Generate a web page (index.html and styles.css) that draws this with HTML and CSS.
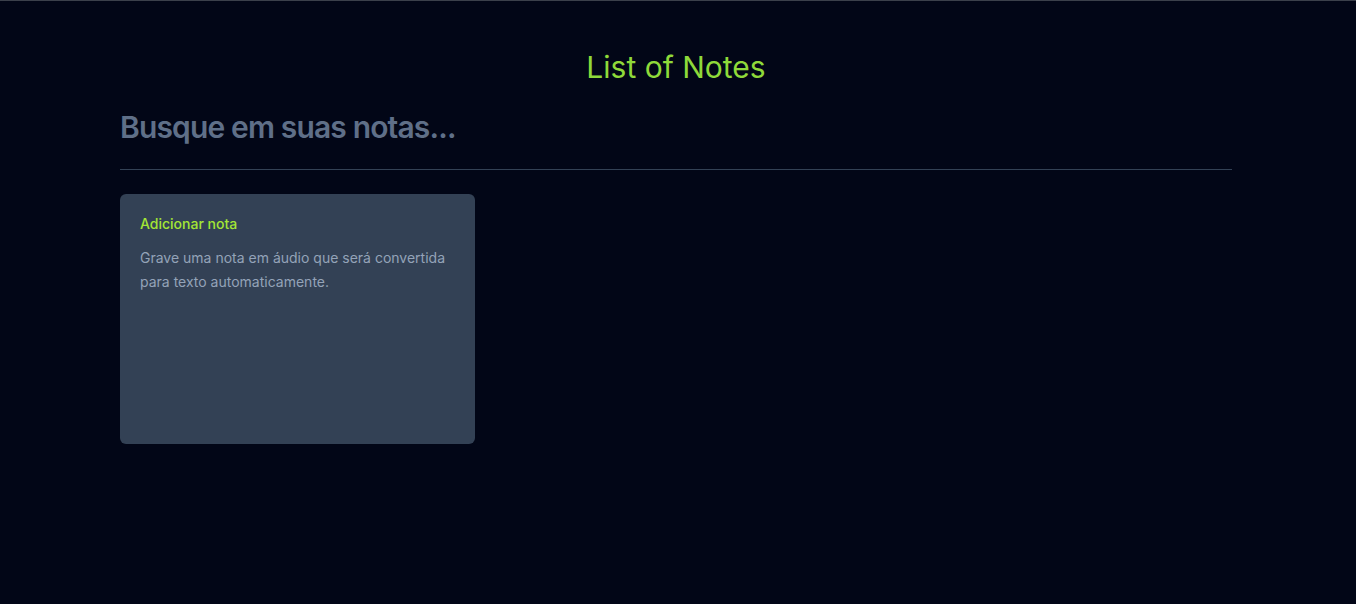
FILE: index.html
```html
<!DOCTYPE html>
<html lang="pt-BR">
<head>
<meta charset="utf-8">
<title>List of Notes</title>
<link rel="stylesheet" href="styles.css">
</head>
<body>
<div class="topline"></div>
<main class="container">
  <h1 class="title">List of Notes</h1>
  <form class="search">
    <input class="search-input" type="text" placeholder="Busque em suas notas...">
  </form>
  <div class="divider"></div>
  <div class="grid">
    <div class="card">
      <span class="card-title">Adicionar nota</span>
      <p class="card-text">Grave uma nota em áudio que será convertida para texto automaticamente.</p>
    </div>
  </div>
</main>
</body>
</html>
```

FILE: styles.css
```css
* { box-sizing: border-box; }
html, body {
  margin: 0;
  padding: 0;
  background: #020617;
  height: 100%;
}
body {
  font-family: Inter, "Noto Sans", sans-serif;
  color: #94a3b8;
}
.topline {
  height: 1px;
  background: #3b404b;
}
.container {
  width: 1116px;
  margin: 0 auto;
  padding-right: 4px;
}
.title {
  margin: 46px 0 0;
  font-size: 30px;
  line-height: 40px;
  font-weight: 400;
  color: #8fd93a;
  text-align: center;
}
.search {
  margin-top: 22px;
}
.search-input {
  display: block;
  width: 100%;
  background: transparent;
  border: 0;
  outline: none;
  padding: 0;
  font-family: Inter, "Noto Sans", sans-serif;
  font-size: 30px;
  line-height: 36px;
  font-weight: 600;
  letter-spacing: -0.85px;
  color: #64748b;
}
.search-input::placeholder { color: #5f6f88; opacity: 1; }
.divider {
  height: 1px;
  background: #334155;
  margin-top: 24px;
}
.grid {
  margin-top: 24px;
  display: grid;
  grid-template-columns: repeat(3, 1fr);
  grid-auto-rows: 250px;
  gap: 24px;
}
.card {
  background: #334155;
  border-radius: 6px;
  padding: 20px;
  display: flex;
  flex-direction: column;
  gap: 12px;
}
.card-title {
  font-size: 14px;
  line-height: 20px;
  font-weight: 500;
  color: #a3e635;
}
.card-text {
  margin: 0;
  font-size: 14px;
  line-height: 24px;
  color: #94a3b8;
}
```
